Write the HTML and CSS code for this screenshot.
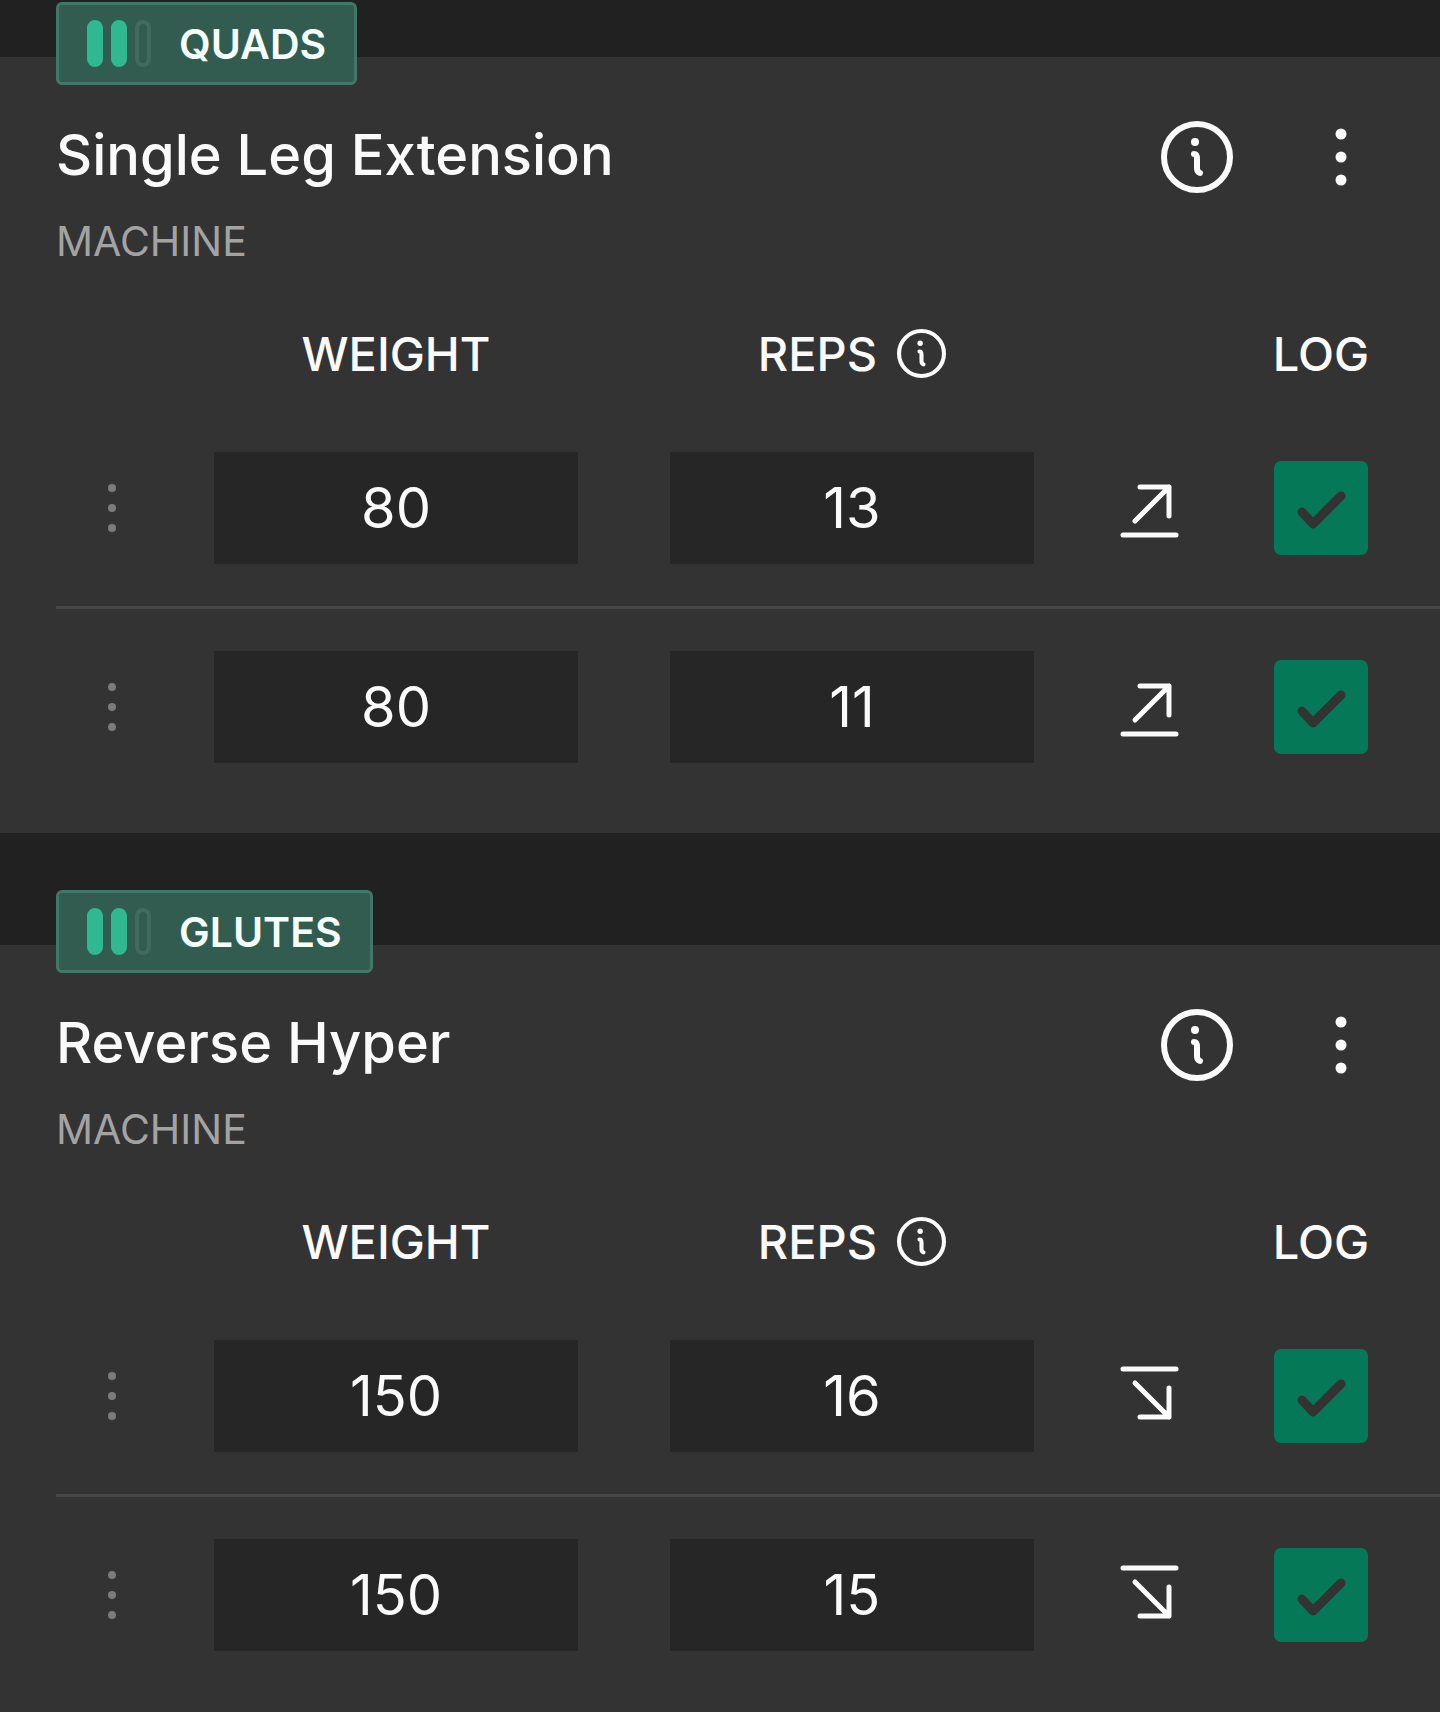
FILE: index.html
```html
<!DOCTYPE html>
<html lang="en">
<head>
    <meta charset="UTF-8">
    <meta name="viewport" content="width=device-width, initial-scale=1.0">
    <title>Workout</title>
    <link rel="stylesheet" href="styles.css">
</head>
<body>
    <svg width="0" height="0" class="sprite" aria-hidden="true">
        <symbol id="icon-info" viewBox="0 0 72 72">
            <path d="M33 33q3 0 3 5v9q0 4 3 5" />
            <circle class="dot" cx="34" cy="21" r="4" />
        </symbol>
        <symbol id="icon-dots" viewBox="0 0 72 72">
            <circle class="dot" cx="36" cy="13" r="5.5" />
            <circle class="dot" cx="36" cy="36" r="5.5" />
            <circle class="dot" cx="36" cy="59" r="5.5" />
        </symbol>
        <symbol id="icon-handle" viewBox="0 0 64 64">
            <circle class="dot" cx="32" cy="12" r="4" />
            <circle class="dot" cx="32" cy="32" r="4" />
            <circle class="dot" cx="32" cy="52" r="4" />
        </symbol>
        <symbol id="icon-up" viewBox="0 0 60 60">
            <path d="M3 57h53M20 9h29v29M49 9L15 43" />
        </symbol>
        <symbol id="icon-down" viewBox="0 0 60 60">
            <path d="M3 3h53M20 51h29V22M49 51L15 17" />
        </symbol>
    </svg>

    <main>
        <section class="exercise">
            <div class="badge">
                <div class="bars"><span class="on"></span><span class="on"></span><span></span></div>
                QUADS
            </div>
            <header>
                <h2>Single Leg Extension</h2>
                <div class="actions">
                    <button aria-label="Exercise info"><svg class="icon" viewBox="0 0 72 72"><circle cx="36" cy="36" r="33" /><use href="#icon-info" /></svg></button>
                    <button aria-label="Exercise menu"><svg class="icon"><use href="#icon-dots" /></svg></button>
                </div>
            </header>
            <p class="equipment">MACHINE</p>
            <table>
                <thead>
                    <tr>
                        <th class="col-handle"></th>
                        <th>WEIGHT</th>
                        <th>
                            <div class="reps">REPS
                                <button aria-label="Reps info"><svg class="icon-small" viewBox="0 0 72 72"><circle cx="36" cy="36" r="33" /><use href="#icon-info" /></svg></button>
                            </div>
                        </th>
                        <th class="col-trend"></th>
                        <th class="col-log">LOG</th>
                    </tr>
                </thead>
                <tbody>
                    <tr>
                        <td><button class="handle" aria-label="Set menu"><svg class="icon-handle"><use href="#icon-handle" /></svg></button></td>
                        <td class="field"><input type="text" inputmode="numeric" value="80" aria-label="Weight, set 1"></td>
                        <td class="field"><input type="text" inputmode="numeric" value="13" aria-label="Reps, set 1"></td>
                        <td><svg class="icon-trend"><use href="#icon-up" /></svg></td>
                        <td class="col-log"><input type="checkbox" checked aria-label="Log set 1"></td>
                    </tr>
                    <tr>
                        <td><button class="handle" aria-label="Set menu"><svg class="icon-handle"><use href="#icon-handle" /></svg></button></td>
                        <td class="field"><input type="text" inputmode="numeric" value="80" aria-label="Weight, set 2"></td>
                        <td class="field"><input type="text" inputmode="numeric" value="11" aria-label="Reps, set 2"></td>
                        <td><svg class="icon-trend"><use href="#icon-up" /></svg></td>
                        <td class="col-log"><input type="checkbox" checked aria-label="Log set 2"></td>
                    </tr>
                </tbody>
            </table>
        </section>

        <section class="exercise">
            <div class="badge">
                <div class="bars"><span class="on"></span><span class="on"></span><span></span></div>
                GLUTES
            </div>
            <header>
                <h2>Reverse Hyper</h2>
                <div class="actions">
                    <button aria-label="Exercise info"><svg class="icon" viewBox="0 0 72 72"><circle cx="36" cy="36" r="33" /><use href="#icon-info" /></svg></button>
                    <button aria-label="Exercise menu"><svg class="icon"><use href="#icon-dots" /></svg></button>
                </div>
            </header>
            <p class="equipment">MACHINE</p>
            <table>
                <thead>
                    <tr>
                        <th class="col-handle"></th>
                        <th>WEIGHT</th>
                        <th>
                            <div class="reps">REPS
                                <button aria-label="Reps info"><svg class="icon-small" viewBox="0 0 72 72"><circle cx="36" cy="36" r="33" /><use href="#icon-info" /></svg></button>
                            </div>
                        </th>
                        <th class="col-trend"></th>
                        <th class="col-log">LOG</th>
                    </tr>
                </thead>
                <tbody>
                    <tr>
                        <td><button class="handle" aria-label="Set menu"><svg class="icon-handle"><use href="#icon-handle" /></svg></button></td>
                        <td class="field"><input type="text" inputmode="numeric" value="150" aria-label="Weight, set 1"></td>
                        <td class="field"><input type="text" inputmode="numeric" value="16" aria-label="Reps, set 1"></td>
                        <td><svg class="icon-trend"><use href="#icon-down" /></svg></td>
                        <td class="col-log"><input type="checkbox" checked aria-label="Log set 1"></td>
                    </tr>
                    <tr>
                        <td><button class="handle" aria-label="Set menu"><svg class="icon-handle"><use href="#icon-handle" /></svg></button></td>
                        <td class="field"><input type="text" inputmode="numeric" value="150" aria-label="Weight, set 2"></td>
                        <td class="field"><input type="text" inputmode="numeric" value="15" aria-label="Reps, set 2"></td>
                        <td><svg class="icon-trend"><use href="#icon-down" /></svg></td>
                        <td class="col-log"><input type="checkbox" checked aria-label="Log set 2"></td>
                    </tr>
                </tbody>
            </table>
        </section>
    </main>
</body>
</html>
```
FILE: styles.css
```css
* {
    box-sizing: border-box;
}

body {
    margin: 0;
    background-color: #212121;
    color: #fafafa;
    font-family: Inter, "Open Sans", sans-serif;
}

main {
    display: flex;
    flex-direction: column;
    gap: 112px;
    padding-top: 57px;
}

button {
    display: block;
    padding: 0;
    border: 0;
    background: none;
    color: inherit;
    cursor: pointer;
}

svg {
    display: block;
    fill: none;
    stroke: currentColor;
    stroke-width: 6px;
    stroke-linecap: round;
    stroke-linejoin: round;
}

.sprite {
    position: absolute;
}

.dot {
    fill: currentColor;
    stroke: none;
}

.icon {
    width: 72px;
    height: 72px;
}

.icon-small {
    width: 49px;
    height: 49px;
}

.icon-handle {
    width: 64px;
    height: 64px;
}

.icon-trend {
    width: 60px;
    height: 60px;
    margin: 0 auto;
    stroke-width: 5px;
}

.exercise {
    position: relative;
    padding: 64px 0 28px 56px;
    background-color: #333;
}

.exercise:last-child {
    padding-bottom: 19px;
}

/* muscle group tag, overlaps the top edge of the card */
.badge {
    position: absolute;
    top: -55px;
    left: 56px;
    display: flex;
    align-items: center;
    gap: 28px;
    height: 83px;
    padding: 0 28px;
    border: 3px solid #3f7866;
    border-radius: 6px;
    background-color: #335c50;
    color: #f4fffb;
    font-size: 41px;
    font-weight: 600;
    line-height: 72px;
}

.bars {
    display: flex;
    gap: 8px;
}

.bars span {
    width: 16px;
    height: 47px;
    border: 4px solid #416b5f;
    border-radius: 8px;
}

.bars .on {
    border-color: #30b990;
    background-color: #30b990;
}

header {
    display: flex;
    justify-content: space-between;
    height: 72px;
    padding-right: 63px;
}

h2 {
    margin: 0;
    font-size: 56px;
    font-weight: 500;
    line-height: 68px;
}

.actions {
    display: flex;
    gap: 72px;
}

.equipment {
    margin: 20px 0 27px;
    color: #a3a3a3;
    font-size: 41px;
    line-height: 56px;
}

table {
    width: 100%;
    table-layout: fixed;
    border-spacing: 0;
}

th {
    height: 114px;
    padding: 0;
    font-size: 47px;
    font-weight: 500;
}

td {
    padding: 42px 0;
}

tbody tr + tr td {
    border-top: 3px solid #484848;
}

.col-handle {
    width: 112px;
}

.col-trend {
    width: 140px;
}

.col-log {
    width: 220px;
    padding-right: 18px;
    text-align: center;
}

.reps {
    display: flex;
    justify-content: center;
    align-items: center;
    gap: 20px;
}

.handle {
    margin: 0 auto;
    color: #7c7c7c;
}

.field {
    padding: 42px 46px;
}

input {
    display: block;
    margin: 0;
    border: 0;
}

input[type="text"] {
    width: 100%;
    height: 112px;
    background-color: #262626;
    color: #fafafa;
    font-family: inherit;
    font-size: 56px;
    text-align: center;
}

input[type="checkbox"] {
    appearance: none;
    width: 94px;
    height: 94px;
    margin: 0 auto;
    border-radius: 7px;
    background-color: #484848;
}

input[type="checkbox"]:checked {
    background: #057857 url("data:image/svg+xml,%3Csvg xmlns='http://www.w3.org/2000/svg' viewBox='0 0 94 94'%3E%3Cpath d='M28 51l11 12 28-28' fill='none' stroke='%23333' stroke-width='9' stroke-linecap='round' stroke-linejoin='round'/%3E%3C/svg%3E");
}
```
